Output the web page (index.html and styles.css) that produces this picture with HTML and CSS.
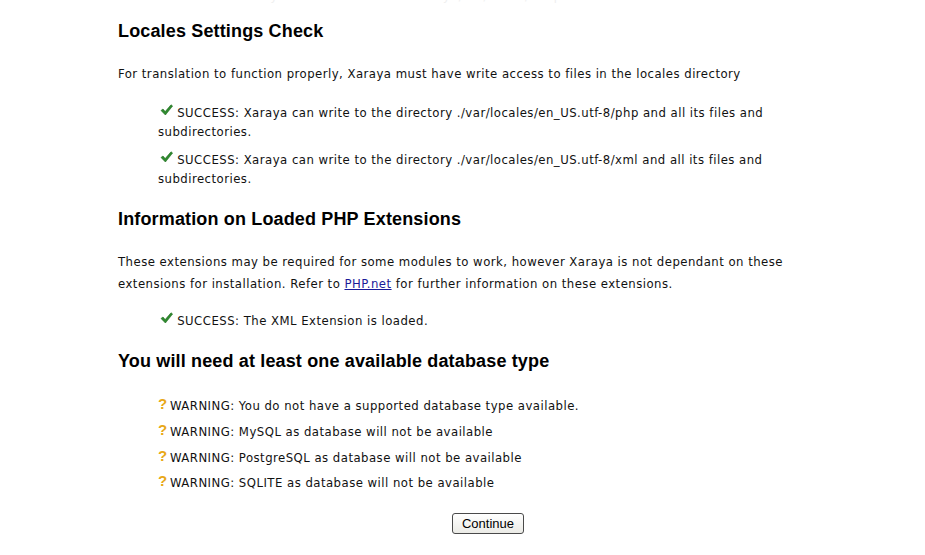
FILE: index.html
```html
<!DOCTYPE html>
<html>
<head>
<meta charset="utf-8">
<link rel="stylesheet" href="styles.css">
</head>
<body>
<div class="page">
  <p class="trace">SUCCESS: Xaraya can write to the directory ./var/cache/templates and all its files</p>

  <h2 class="h-first">Locales Settings Check</h2>
  <p class="intro">For translation to function properly, Xaraya must have write access to files in the locales directory</p>
  <ul class="checks">
    <li><svg class="ok" viewBox="0 0 13 12" width="13" height="12"><path d="M1 6.5 L3 5 L5.2 7.6 L11 0.8 L12.6 2 L5.4 11 Z" fill="#2f8a2f" stroke="#1d6b1d" stroke-width="0.6"/></svg> SUCCESS: Xaraya can write to the directory ./var/locales/en_US.utf-8/php and all its files and subdirectories.</li>
    <li><svg class="ok" viewBox="0 0 13 12" width="13" height="12"><path d="M1 6.5 L3 5 L5.2 7.6 L11 0.8 L12.6 2 L5.4 11 Z" fill="#2f8a2f" stroke="#1d6b1d" stroke-width="0.6"/></svg> SUCCESS: Xaraya can write to the directory ./var/locales/en_US.utf-8/xml and all its files and subdirectories.</li>
  </ul>

  <h2 class="h-second">Information on Loaded PHP Extensions</h2>
  <p class="intro2">These extensions may be required for some modules to work, however Xaraya is not dependant on these extensions for installation. Refer to <a href="#">PHP.net</a> for further information on these extensions.</p>
  <ul class="checks single">
    <li><svg class="ok" viewBox="0 0 13 12" width="13" height="12"><path d="M1 6.5 L3 5 L5.2 7.6 L11 0.8 L12.6 2 L5.4 11 Z" fill="#2f8a2f" stroke="#1d6b1d" stroke-width="0.6"/></svg> SUCCESS: The XML Extension is loaded.</li>
  </ul>

  <h2 class="h-third">You will need at least one available database type</h2>
  <ul class="warnings">
    <li><span class="q">?</span>WARNING: You do not have a supported database type available.</li>
    <li><span class="q">?</span>WARNING: MySQL as database will not be available</li>
    <li><span class="q">?</span>WARNING: PostgreSQL as database will not be available</li>
    <li><span class="q">?</span>WARNING: SQLITE as database will not be available</li>
  </ul>

  <div class="actions">
    <button class="btn" type="button">Continue</button>
  </div>
</div>
</body>
</html>
```

FILE: styles.css
```css
html, body {
  margin: 0;
  padding: 0;
  background: #ffffff;
}

body {
  font-family: "DejaVu Sans Condensed", "DejaVu Sans", sans-serif;
  font-size: 13px;
  letter-spacing: 0.47px;
  color: #111111;
  overflow: hidden;
}

.page {
  margin-left: 118px;
  width: 690px;
}

.trace {
  margin: -11px 0 0 57px;
  line-height: 14px;
  height: 14px;
  color: #efefef;
  white-space: nowrap;
}

h2 {
  font-family: "Liberation Sans", Arial, sans-serif;
  font-weight: bold;
  font-size: 18px;
  letter-spacing: 0.15px;
  line-height: 22px;
  margin: 0;
  color: #000;
}

.h-first { margin-top: 17px; }
.h-second { margin-top: 19.5px; }
.h-third { margin-top: 19px; }

.intro {
  margin: 21.5px 0 0;
  line-height: 20px;
}

.intro2 {
  margin: 21px 0 0;
  line-height: 22px;
}

.intro2 a {
  color: #1a1a99;
  text-decoration: underline;
}

ul {
  list-style: none;
  margin: 0;
  padding: 0 0 0 40px;
}

.checks {
  margin-top: 19px;
}

.checks li {
  line-height: 19.5px;
}

.checks li + li {
  margin-top: 8px;
}

.checks.single {
  margin-top: 16px;
}

.ok {
  display: inline-block;
  vertical-align: 1px;
  margin-left: 2px;
}

.warnings {
  margin-top: 24.5px;
}

.warnings li {
  line-height: 19.5px;
}

.warnings li + li {
  margin-top: 6.3px;
}

.q {
  display: inline-block;
  width: 12px;
  line-height: 10px;
  font-family: "Liberation Sans", Arial, sans-serif;
  font-weight: bold;
  font-size: 15px;
  letter-spacing: 0;
  color: #e8a818;
  vertical-align: 1px;
}

.actions {
  margin-top: 20.5px;
  padding-left: 334px;
}

.btn {
  width: 72px;
  height: 21px;
  padding: 0;
  font-family: "Liberation Sans", Arial, sans-serif;
  font-size: 13px;
  letter-spacing: 0;
  color: #000;
  background: linear-gradient(#ffffff, #ebebe6);
  border: 1px solid #4a4a4a;
  border-radius: 3px;
}
```
